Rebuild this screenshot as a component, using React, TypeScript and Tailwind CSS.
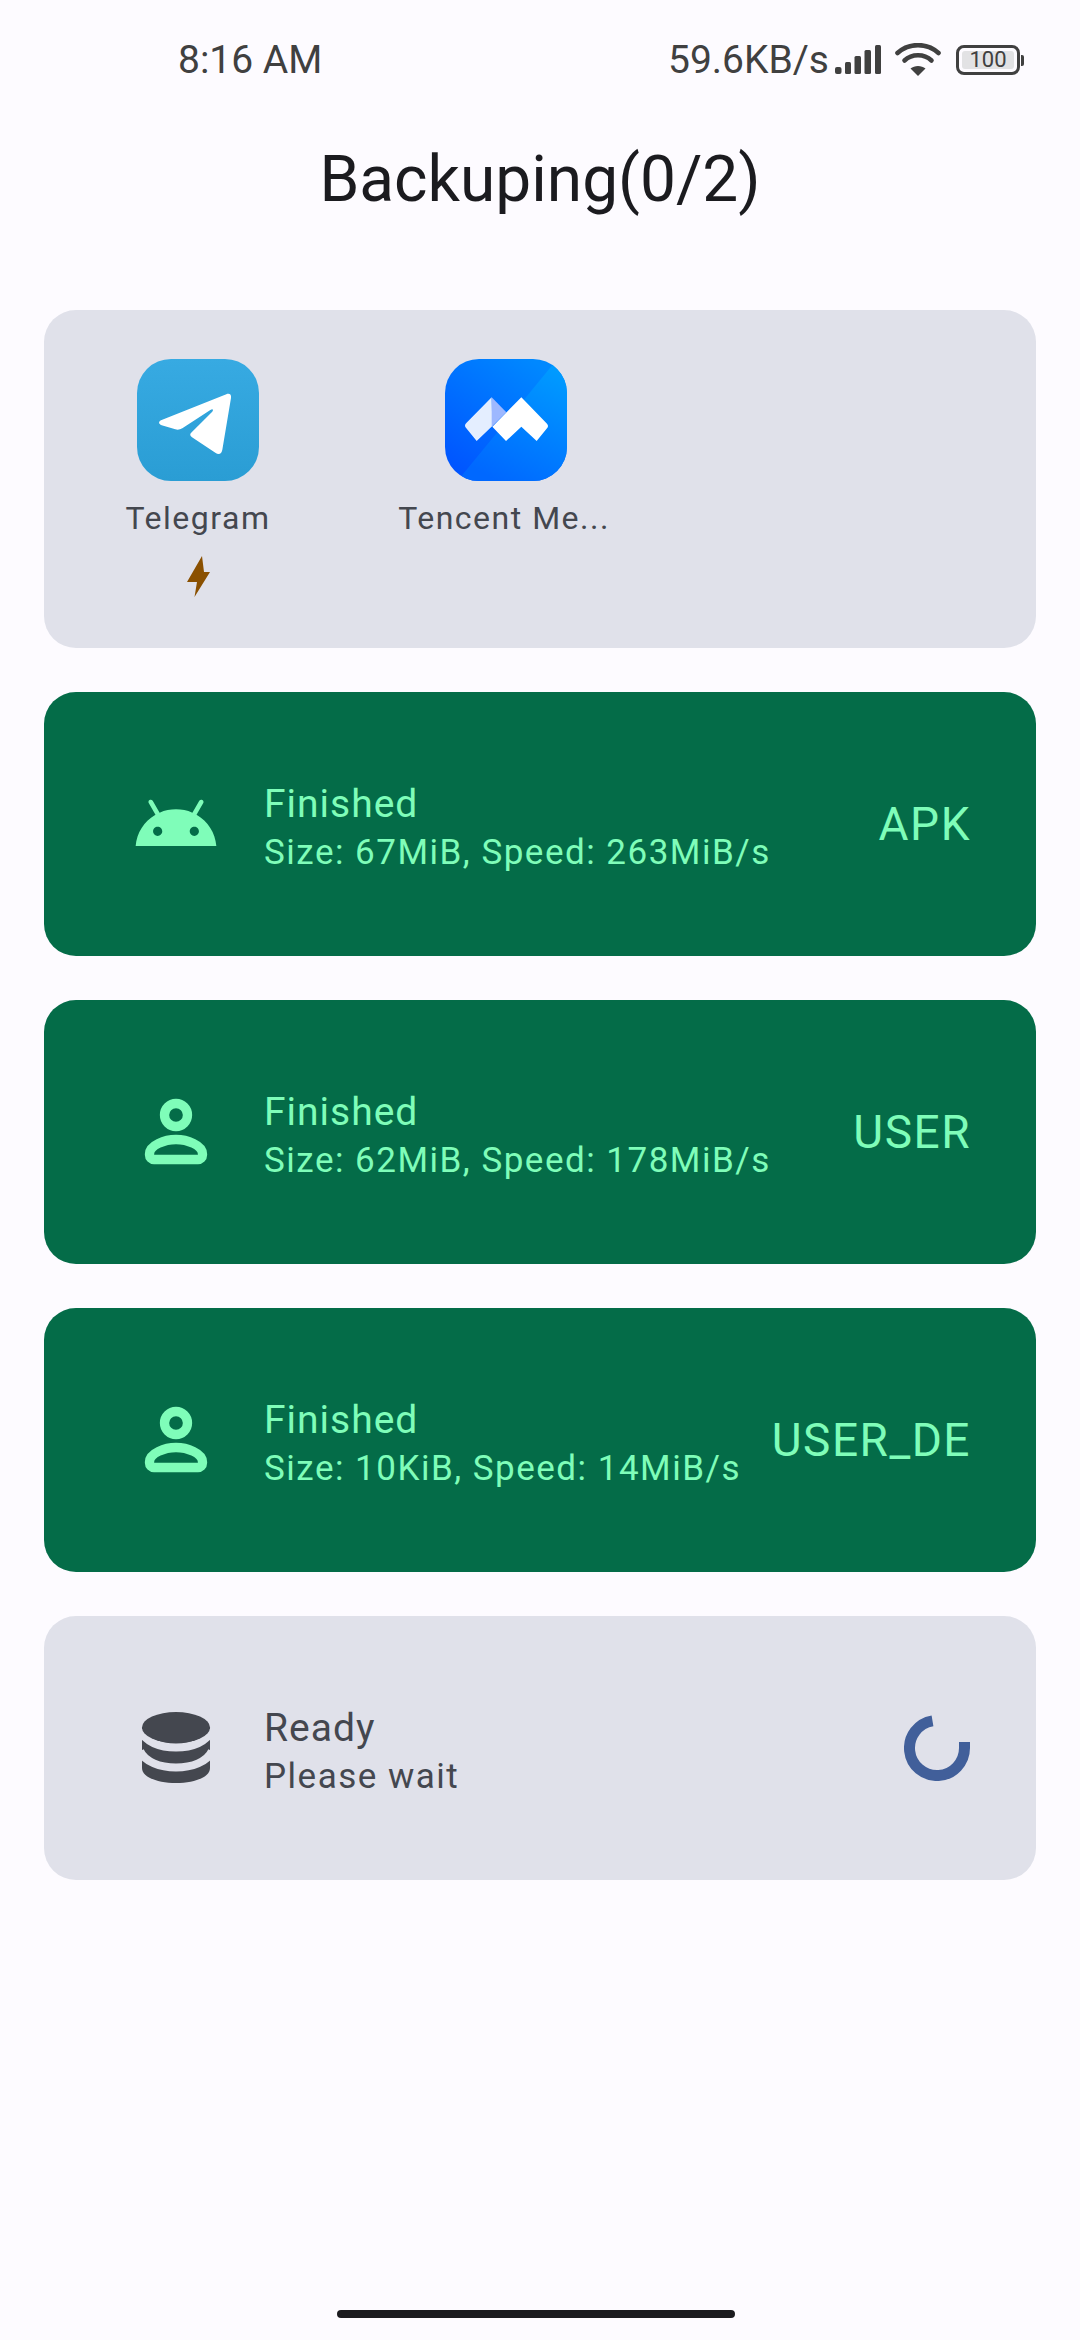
import type { ReactNode } from "react";

function SignalIcon() {
  return (
    <svg width="47" height="30" viewBox="0 0 47 30" className="text-[#404040]" fill="currentColor">
      <rect x="0" y="22" width="6.5" height="7" rx="2" />
      <rect x="10" y="17" width="6" height="12" rx="1.5" />
      <rect x="19.5" y="11" width="6.5" height="18" rx="1.5" />
      <rect x="29.5" y="5" width="6.5" height="24" rx="1.5" />
      <rect x="40" y="0" width="6" height="29" rx="1.5" />
    </svg>
  );
}

function WifiIcon() {
  return (
    <svg width="46" height="34" viewBox="0 0 46 34" fill="none" stroke="#404040" strokeWidth="4.6" strokeLinecap="round">
      <path d="M2.5 10C14 -.5 32 -.5 43.5 10" />
      <path d="M9.5 17.500C17 10.500 29 10.500 36.500 17.500" />
      <path d="M23 33 L15.500 25.500 C19.500 22 26.500 22 30.500 25.500 Z" fill="#404040" stroke="none" />
    </svg>
  );
}

function Battery() {
  return (
    <div className="flex items-center gap-[1px]">
      <div className="w-[64px] h-[30px] rounded-[8px] border-[3px] border-[#404040] p-[3px] flex">
        <div className="flex-1 rounded-[3px] bg-[#e2e2e4] flex items-center justify-center text-[22px] leading-none text-[#404040]">100</div>
      </div>
      <div className="w-[3px] h-[11px] rounded-r-[2px] bg-[#404040]" />
    </div>
  );
}

function TelegramLogo() {
  return (
    <svg width="122" height="122" viewBox="50 55 366 366" className="rounded-[34px]">
      <defs>
        <linearGradient id="tg" x1="0" y1="0" x2="0" y2="1">
          <stop offset="0" stopColor="#37aae2" />
          <stop offset="1" stopColor="#2a9dd4" />
        </linearGradient>
      </defs>
      <rect x="50" y="55" width="366" height="366" fill="url(#tg)" />
      <path
        d="M122 239 L318 161 C327 157 334 162 332 172 L306 327 C304 340 295 343 285 336 L215 290 C208 285 208 280 214 275 L275 214 C281 207 277 203 270 208 L186 263 C179 267 172 268 165 266 L124 254 C114 250 114 243 122 239 Z"
        fill="#fff"
      />
    </svg>
  );
}

function MeetingLogo() {
  return (
    <svg width="122" height="122" viewBox="43 55 366 366" className="rounded-[34px]">
      <defs>
        <linearGradient id="tm1" x1="0" y1="1" x2="0.7" y2="0">
          <stop offset="0" stopColor="#004fff" />
          <stop offset="1" stopColor="#0088ff" />
        </linearGradient>
        <linearGradient id="tm2" gradientUnits="userSpaceOnUse" x1="380" y1="80" x2="200" y2="420">
          <stop offset="0" stopColor="#009cff" />
          <stop offset="1" stopColor="#0068ff" />
        </linearGradient>
      </defs>
      <rect x="43" y="55" width="366" height="366" fill="url(#tm1)" />
      <path d="M380 55 H409 V421 H80 Z" fill="url(#tm2)" />
      <path d="M183 170 L107 247 Q99 255 107 263 L138 301 L185 256 Z" fill="#e4eeff" />
      <path d="M183 170 L227 215 L183 258 Z" fill="#9db8ff" />
      <path d="M272 170 L349 249 Q355 256 349 263 L318 301 L272 258 L226 301 L185 258 Z" fill="#fff" />
    </svg>
  );
}

function AndroidIcon() {
  return (
    <svg width="88" height="88" viewBox="0 0 24 24" fill="#7ffdb9">
      <path d="M17.6 9.48l1.84-3.18c.16-.31.04-.69-.26-.85-.29-.15-.65-.06-.83.22l-1.88 3.24c-2.86-1.21-6.08-1.21-8.94 0L5.650 5.670c-.19-.29-.58-.38-.87-.2-.28.18-.37.54-.22.83L6.400 9.480C3.300 11.250 1.280 14.440 1 18h22c-.28-3.560-2.300-6.750-5.400-8.520zM7 15.250c-.69 0-1.250-.56-1.250-1.250s.56-1.250 1.250-1.250 1.250.56 1.250 1.250-.56 1.250-1.250 1.250zm10 0c-.69 0-1.250-.56-1.250-1.250s.56-1.250 1.250-1.250 1.250.56 1.250 1.250-.56 1.250-1.250 1.250z" />
    </svg>
  );
}

function PersonIcon() {
  return (
    <svg width="88" height="88" viewBox="0 0 88 88" fill="none" stroke="#7ffdb9" strokeWidth="9.300">
      <circle cx="44" cy="27" r="11.500" />
      <path d="M17.500 66C17.500 57 33 51.500 44 51.500C55 51.500 70.500 57 70.500 66V67a4.500 4.500 0 0 1-4.500 4.500H22a4.500 4.500 0 0 1-4.500-4.500Z" />
    </svg>
  );
}

function DatabaseIcon() {
  return (
    <svg width="88" height="88" viewBox="0 0 88 88" fill="none">
      <path d="M10 23.500V64C10 73 25 79 44 79C63 79 78 73 78 64V23.500Z" fill="#44474f" />
      <path d="M8 26C13 38 28 43.500 44 43.500C60 43.500 75 38 80 26" stroke="#e0e1ea" strokeWidth="8" />
      <path d="M8 47C13 58 28 63.500 44 63.500C60 63.500 75 58 80 47" stroke="#e0e1ea" strokeWidth="8" />
      <ellipse cx="44" cy="23.500" rx="34" ry="15.500" fill="#44474f" />
    </svg>
  );
}

function Spinner() {
  return (
    <svg width="66" height="66" viewBox="0 0 66 66" fill="none" className="-mr-[2px]">
      <path d="M60.500 27V33A27.500 27.500 0 1 1 28.500 5.900" stroke="#415f9a" strokeWidth="11" />
    </svg>
  );
}

function StatusCard({
  icon,
  title,
  detail,
  right,
  done,
}: {
  icon: ReactNode;
  title: string;
  detail: string;
  right: ReactNode;
  done?: boolean;
}) {
  return (
    <div className={`h-[264px] rounded-[32px] flex items-center pl-[88px] pr-[68px] ${done ? "bg-[#046c48] text-[#7ffdb9]" : "bg-[#e0e1ea] text-[#44474f]"}`}>
      {icon}
      <div className="ml-[44px] mt-[9px] flex-1 min-w-0">
        <div className="text-[39px] leading-[46px] tracking-[1px]">{title}</div>
        <div className="mt-[3px] text-[35px] leading-[46px] tracking-[1.5px] whitespace-nowrap">{detail}</div>
      </div>
      {right}
    </div>
  );
}

function PartLabel({ children }: { children: string }) {
  return <span className="-mr-[3px] text-[46px] tracking-[1.5px]">{children}</span>;
}

export default function App() {
  return (
    <div className="w-[1080px] h-[2340px] bg-[#fdfbff] flex flex-col font-['Roboto',sans-serif]">
      {/* status bar */}
      <div className="h-[116px] shrink-0 pl-[178px] pr-[56px] pt-[37px] flex items-start justify-between text-[#404040]">
        <span className="text-[39px] leading-[46px]">8:16 AM</span>
        <div className="flex items-center h-[46px]">
          <span className="text-[39px] leading-[46px]">59.6KB/s</span>
          <div className="ml-[6px] mr-[13px]"><SignalIcon /></div>
          <div className="mr-[15px]"><WifiIcon /></div>
          <Battery />
        </div>
      </div>

      <h1 className="h-[194px] shrink-0 pt-[26px] text-center text-[64px] leading-[76px] text-[#1b1b1f]">Backuping(0/2)</h1>

      <div className="flex flex-col gap-[44px] px-[44px]">
        <div className="h-[338px] rounded-[32px] bg-[#e0e1ea] flex items-start pt-[49px] text-[#44474f]">
          <div className="w-[308px] flex flex-col items-center">
            <TelegramLogo />
            <div className="mt-[17px] text-[32px] leading-[40px] tracking-[1.5px]">Telegram</div>
            <svg className="mt-[18px]" width="23" height="41" viewBox="0 0 23 41" fill="#8a5000">
              <path d="M15 0L17 16H23L7.500 41L10 26H0Z" />
            </svg>
          </div>
          <div className="w-[308px] flex flex-col items-center">
            <MeetingLogo />
            <div className="mt-[17px] pr-[4px] text-[32px] leading-[40px] tracking-[1.5px]">Tencent Me...</div>
          </div>
        </div>

        <StatusCard done icon={<AndroidIcon />} title="Finished" detail="Size: 67MiB, Speed: 263MiB/s" right={<PartLabel>APK</PartLabel>} />
        <StatusCard done icon={<PersonIcon />} title="Finished" detail="Size: 62MiB, Speed: 178MiB/s" right={<PartLabel>USER</PartLabel>} />
        <StatusCard done icon={<PersonIcon />} title="Finished" detail="Size: 10KiB, Speed: 14MiB/s" right={<PartLabel>USER_DE</PartLabel>} />
        <StatusCard icon={<DatabaseIcon />} title="Ready" detail="Please wait" right={<Spinner />} />
      </div>

      {/* home indicator */}
      <div className="mt-auto mb-[22px] ml-[337px] w-[398px] h-[8px] rounded-full bg-[#1b1b1f]" />
    </div>
  );
}
